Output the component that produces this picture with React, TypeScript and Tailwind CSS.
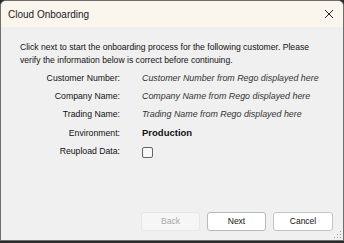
import React from 'react';

const rows = [
  { label: 'Customer Number:', value: 'Customer Number from Rego displayed here' },
  { label: 'Company Name:', value: 'Company Name from Rego displayed here' },
  { label: 'Trading Name:', value: 'Trading Name from Rego displayed here' },
];

const font = { fontFamily: '"Liberation Sans", Arial, sans-serif' };

const App: React.FC = () => {
  return (
    <div className="w-[344px] h-[243px] bg-[#2a2a2a] overflow-hidden" style={font}>
      <div className="relative flex flex-col w-[344px] h-[241px] bg-[#f0f0f0] border border-[#6e6e6e] rounded-t-[6px] overflow-hidden">
        <div className="flex items-center justify-between h-[26px] pl-[7px] pr-[8px] bg-[#faf5ed] shrink-0">
          <span className="text-[10px] text-[#1a1a1a]">Cloud Onboarding</span>
          <svg width="10" height="10" viewBox="0 0 10 10" className="mr-[1px]">
            <path d="M1 1L9 9M9 1L1 9" stroke="#222" strokeWidth="1" fill="none" />
          </svg>
        </div>

        <div className="flex-1 flex flex-col px-[19px] pt-[14px]">
          <p className="text-[8.6px] leading-[13px] text-[#111]">
            Click next to start the onboarding process for the following customer. Please verify the information below is correct before continuing.
          </p>

          <div className="mt-[3px] flex flex-col">
            {rows.map(r => (
              <div key={r.label} className="flex items-center h-[18px]">
                <span className="w-[100px] text-right text-[8.7px] text-[#111]">{r.label}</span>
                <span className="ml-[22px] text-[8.9px] italic text-[#333]">{r.value}</span>
              </div>
            ))}
            <div className="flex items-center h-[19px]">
              <span className="w-[100px] text-right text-[8.7px] text-[#111]">Environment:</span>
              <span className="ml-[22px] text-[9.5px] font-bold text-[#111]">Production</span>
            </div>
            <div className="flex items-center h-[18px]">
              <span className="w-[100px] text-right text-[8.7px] text-[#111]">Reupload Data:</span>
              <span className="ml-[22px] w-[11px] h-[11px] rounded-[2px] border border-[#666] bg-[#f8f8f8]" />
            </div>
          </div>

          <div className="mt-auto mb-[9px] flex justify-end gap-[7px] mr-[-9px]">
            <button className="w-[59px] h-[19px] rounded-[3px] border border-[#e6e6e6] bg-[#f6f6f6] text-[8.5px] text-[#a8a8a8]">Back</button>
            <button className="w-[59px] h-[19px] rounded-[3px] border border-[#b8b8b8] bg-white text-[8.5px] text-[#111]">Next</button>
            <button className="w-[60px] h-[19px] rounded-[3px] border border-[#c4c4c4] bg-white text-[8.5px] text-[#111]">Cancel</button>
          </div>
        </div>

        <svg width="8" height="8" viewBox="0 0 8 8" className="absolute right-[1px] bottom-[1px]">
          <rect x="6" y="0" width="1" height="1" fill="#999" />
          <rect x="3" y="3" width="1" height="1" fill="#999" />
          <rect x="6" y="3" width="1" height="1" fill="#999" />
          <rect x="0" y="6" width="1" height="1" fill="#999" />
          <rect x="3" y="6" width="1" height="1" fill="#999" />
          <rect x="6" y="6" width="1" height="1" fill="#999" />
        </svg>
      </div>
    </div>
  );
};

export default App;
